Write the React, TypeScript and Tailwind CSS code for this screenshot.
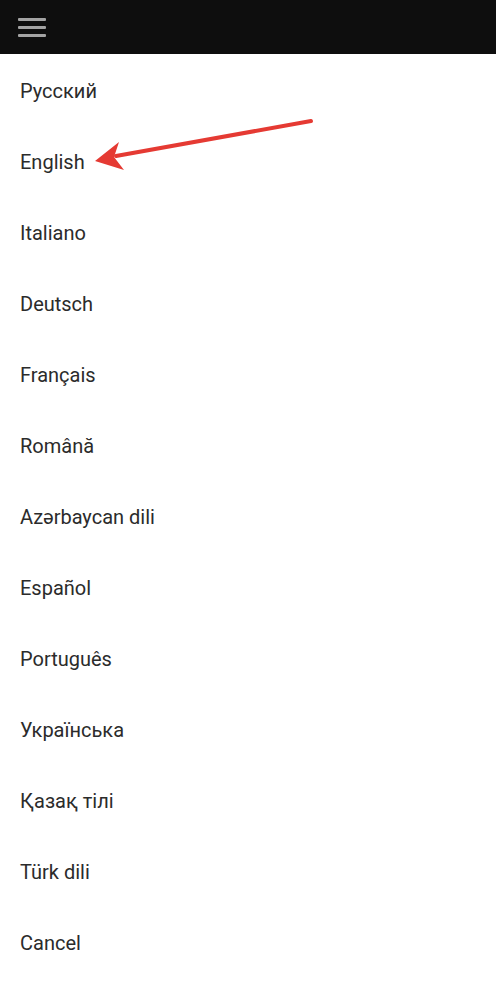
import React from 'react';

const languages = [
  'Русский',
  'English',
  'Italiano',
  'Deutsch',
  'Français',
  'Română',
  'Azərbaycan dili',
  'Español',
  'Português',
  'Українська',
  'Қазақ тілі',
  'Türk dili',
  'Cancel',
];

const App: React.FC = () => {
  return (
    <div className="relative min-h-[985px] bg-white font-['Roboto',sans-serif]">
      {/* Toolbar */}
      <div className="h-[54px] bg-[#0e0e0e] flex items-center px-[18px]">
        <div className="flex flex-col gap-[5px] w-[28px]">
          <span className="block h-[3px] bg-[#a3a3a3] rounded-[1px]" />
          <span className="block h-[3px] bg-[#a3a3a3] rounded-[1px]" />
          <span className="block h-[3px] bg-[#a3a3a3] rounded-[1px]" />
        </div>
      </div>

      {/* Language list */}
      <ul className="pt-[1px]">
        {languages.map((lang) => (
          <li key={lang} className="h-[71px] flex items-center px-[20px] text-[20px] text-[#2b2b2b]">
            {lang}
          </li>
        ))}
      </ul>

      {/* Annotation arrow */}
      <svg className="absolute left-0 top-0 pointer-events-none" width="496" height="200" viewBox="0 0 496 200">
        <line x1="311" y1="121" x2="116" y2="156" stroke="#e53a33" strokeWidth="4" strokeLinecap="round" />
        <polygon points="95,161 119,142 114,157 124,170" fill="#e53a33" />
      </svg>
    </div>
  );
};

export default App;
